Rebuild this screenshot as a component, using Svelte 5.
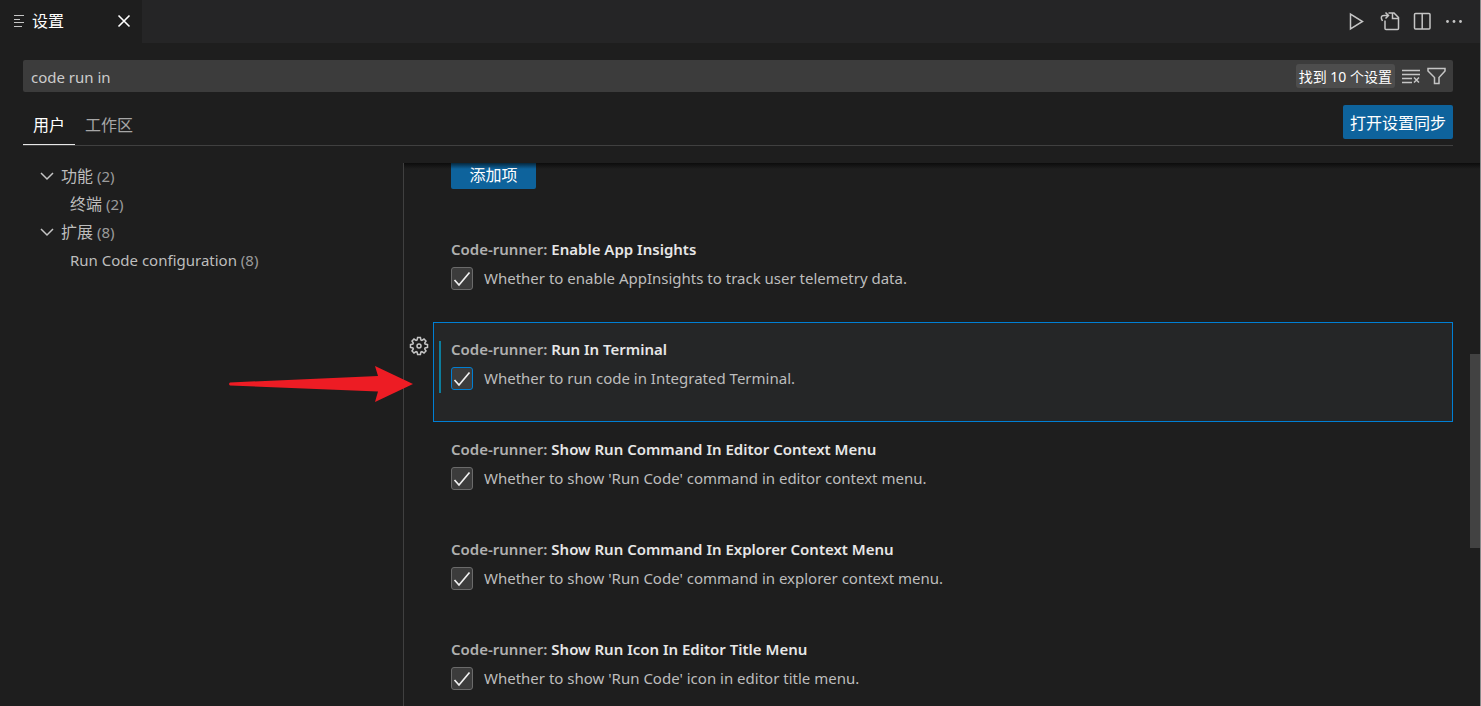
<script lang="ts">
  type TreeItem = { label: string; count: number; lang: string; child?: boolean };
  type Setting = { id: string; title: string; text: string; checked: boolean };

  const tree: TreeItem[] = [
    { label: '功能', count: 2, lang: 'zh' },
    { label: '终端', count: 2, lang: 'zh', child: true },
    { label: '扩展', count: 8, lang: 'zh' },
    { label: 'Run Code configuration', count: 8, lang: 'en', child: true },
  ];

  let settings = $state<Setting[]>([
    {
      id: 'enableAppInsights',
      title: 'Enable App Insights',
      text: 'Whether to enable AppInsights to track user telemetry data.',
      checked: true,
    },
    {
      id: 'runInTerminal',
      title: 'Run In Terminal',
      text: 'Whether to run code in Integrated Terminal.',
      checked: true,
    },
    {
      id: 'showEditorContext',
      title: 'Show Run Command In Editor Context Menu',
      text: "Whether to show 'Run Code' command in editor context menu.",
      checked: true,
    },
    {
      id: 'showExplorerContext',
      title: 'Show Run Command In Explorer Context Menu',
      text: "Whether to show 'Run Code' command in explorer context menu.",
      checked: true,
    },
    {
      id: 'showRunIcon',
      title: 'Show Run Icon In Editor Title Menu',
      text: "Whether to show 'Run Code' icon in editor title menu.",
      checked: true,
    },
  ]);

  let query = $state('code run in');
  let scope = $state('用户');
  let selected = $state('runInTerminal');
</script>

<div class="window">
  <header class="tabs">
    <div class="tab">
      <svg class="tab-icon" viewBox="0 0 12 14">
        <path d="M1 1.500h10M1 5.500h6M1 8.500h10M1 12.500h8" />
      </svg>
      <span class="tab-name">设置</span>
      <button class="icon" aria-label="关闭">
        <svg width="20" height="20" viewBox="0 0 20 20" class="bright">
          <path d="M4.500 4.500l11 11M15.500 4.500l-11 11" />
        </svg>
      </button>
    </div>
    <div class="actions">
      <button class="icon" aria-label="Run Code">
        <svg width="20" height="20" viewBox="0 0 20 20">
          <path d="M2.500 3v15L14.500 10.500z" />
        </svg>
      </button>
      <button class="icon" aria-label="打开设置 (json)">
        <svg width="20" height="20" viewBox="0 0 20 20">
          <path d="M5 9.500v8q0 1 1 1h11.500q1 0 1-1V6.500L14 2H8.500M12.500 2v5.500h6" />
          <path d="M2.500 10Q-.5 4.500 4 4.500h4.500M5.500 1.500l3 3-3 3" />
        </svg>
      </button>
      <button class="icon" aria-label="拆分编辑器">
        <svg width="20" height="20" viewBox="0 0 20 20">
          <rect x="2.500" y="2.500" width="15.500" height="15.500" rx="1" />
          <path d="M10.200 2.500v15.500" />
        </svg>
      </button>
      <button class="icon" aria-label="更多">
        <svg width="20" height="20" viewBox="0 0 20 20" class="dots">
          <circle cx="3.500" cy="10.500" r="1.400" />
          <circle cx="10" cy="10.500" r="1.400" />
          <circle cx="16.500" cy="10.500" r="1.400" />
        </svg>
      </button>
    </div>
  </header>

  <div class="head">
    <div class="search">
      <input type="text" aria-label="搜索设置" bind:value={query} />
      <span class="found">找到 10 个设置</span>
      <button class="icon" aria-label="清除搜索">
        <svg width="20" height="20" viewBox="0 0 20 20">
          <path d="M1 4.500h18M1 8.500h18M1 12.500h10M1 16.500h10M13 11.500l5 5M18 11.500l-5 5" />
        </svg>
      </button>
      <button class="icon" aria-label="筛选">
        <svg width="20" height="20" viewBox="0 0 20 20">
          <path d="M1 2.500h17v2.500l-6 6.500v6H7.500v-6L1 5z" />
        </svg>
      </button>
    </div>

    <div class="scopes">
      {#each ['用户', '工作区'] as name}
        <button class="scope" class:active={scope == name} onclick={() => (scope = name)}>{name}</button>
      {/each}
      <button class="primary sync">打开设置同步</button>
    </div>
  </div>

  <div class="body">
    <nav class="toc">
      <ul>
        {#each tree as item}
          <li class:child={item.child}>
            {#if !item.child}
              <svg width="16" height="16" viewBox="0 0 16 16">
                <path d="M2 5l6 6 6-6" />
              </svg>
            {/if}
            <span><span lang={item.lang}>{item.label}</span> <span class="count">({item.count})</span></span>
          </li>
        {/each}
      </ul>
    </nav>

    <main class="list">
      <button class="primary add">添加项</button>
      {#each settings as s (s.id)}
        <div class="setting" class:selected={selected == s.id} onfocusin={() => (selected = s.id)}>
          {#if selected == s.id}
            <button class="icon gear" aria-label="更多操作">
              <svg width="20" height="20" viewBox="0 0 20 20">
                <path
                  d="M8.600 1.500h2.800l.5 2.400 1 .4 2.100-1.300 2 2-1.300 2.100.4 1 2.400.5v2.800l-2.400.5-.4 1 1.300 2.100-2 2-2.100-1.300-1 .4-.5 2.400H8.600l-.5-2.400-1-.4L5 17l-2-2 1.300-2.100-.4-1-2.400-.5V8.600l2.400-.5.4-1L3 5l2-2 2.100 1.300 1-.4z"
                />
                <circle cx="10" cy="10" r="2" />
              </svg>
            </button>
          {/if}
          <div class="content" class:modified={s.id == 'runInTerminal'}>
            <h3><span class="category">Code-runner:</span> {s.title}</h3>
            <label>
              <input type="checkbox" bind:checked={s.checked} />
              <span class="text">{s.text}</span>
            </label>
          </div>
        </div>
      {/each}
    </main>
    <div class="shadow"></div>
    <div class="thumb"></div>
    <svg class="arrow" width="186" height="38" viewBox="0 0 186 38">
      <path d="M1 17.500L149 11 146 1l38 18-38 18 3-10.500L1 20.500q-2-1.500 0-3z" />
    </svg>
  </div>
</div>

<style>
  :global(body) {
    margin: 0;
    background: #1e1e1e;
  }
  .window {
    display: flex;
    flex-direction: column;
    box-sizing: border-box;
    height: 100vh;
    overflow: hidden;
    border-right: 1px solid #8a8a8a;
    background: #1e1e1e;
    color: #bdbdbd;
    font: 15px/20px 'Noto Sans', 'Noto Sans CJK SC', sans-serif;
  }
  button,
  input {
    font: inherit;
    color: inherit;
  }
  svg {
    display: block;
    flex: none;
    fill: none;
    stroke: #c5c5c5;
    stroke-width: 1.5;
  }
  .icon {
    display: flex;
    padding: 0;
    border: 0;
    background: none;
    cursor: pointer;
  }
  .bright {
    stroke: #fff;
    stroke-width: 1.6;
  }
  .dots {
    fill: #c5c5c5;
    stroke: none;
  }

  .tabs {
    display: flex;
    flex: none;
    justify-content: space-between;
    height: 43px;
    background: #252526;
  }
  .tab {
    display: flex;
    align-items: center;
    box-sizing: border-box;
    width: 142px;
    padding: 0 8px 2px 13px;
    background: #1e1e1e;
    color: #fff;
    font-size: 16px;
  }
  .tab-icon {
    width: 12px;
    height: 14px;
    margin-right: 7px;
    stroke-width: 1.2;
  }
  .tab-name {
    flex: 1;
  }
  .actions {
    display: flex;
    align-items: center;
    gap: 12px;
    padding: 0 16px 2px 0;
  }

  .head {
    flex: none;
    padding: 17px 27px 0 23px;
  }
  .search {
    display: flex;
    align-items: center;
    gap: 6px;
    height: 32px;
    padding: 0 6px 0 8px;
    border-radius: 2px;
    background: #3c3c3c;
  }
  .search input {
    flex: 1;
    min-width: 0;
    padding: 2px 0 0;
    border: 0;
    outline: 0;
    background: none;
    color: #ccc;
  }
  .found {
    padding: 3px 3px 1px;
    border-radius: 3px;
    background: #4d4d4d;
    color: #fff;
    font-size: 14px;
  }
  .scopes {
    display: flex;
    align-items: flex-end;
    height: 53px;
    border-bottom: 1px solid #404040;
  }
  .scope {
    height: 40px;
    padding: 0 10px;
    border: 0;
    border-bottom: 1px solid transparent;
    background: none;
    color: #a6a6a6;
    font-size: 16px;
    cursor: pointer;
  }
  .scope.active {
    border-color: #e7e7e7;
    color: #fff;
  }
  .primary {
    border: 0;
    border-radius: 2px;
    background: #0e639c;
    color: #fff;
    font-size: 16px;
    cursor: pointer;
  }
  .sync {
    height: 34px;
    margin: 0 0 6px auto;
    padding: 2px 7px 0;
  }

  .body {
    position: relative;
    display: flex;
    flex: 1;
    min-height: 0;
    margin-top: 17px;
  }
  .toc {
    box-sizing: border-box;
    width: 404px;
    border-right: 1px solid #404040;
  }
  .toc ul {
    display: flex;
    flex-direction: column;
    margin: 0;
    padding: 0 0 0 39px;
    list-style: none;
  }
  .toc li {
    display: flex;
    align-items: center;
    gap: 6px;
    box-sizing: border-box;
    height: 28px;
    padding-bottom: 2px;
  }
  .toc li.child {
    padding-left: 31px;
  }
  .toc [lang='zh'] {
    font-size: 16px;
  }
  .count {
    color: #9b9b9b;
  }

  .list {
    flex: 1;
    min-width: 0;
    padding: 0 27px 0 29px;
    overflow: hidden;
  }
  .add {
    display: block;
    width: 85px;
    height: 32px;
    margin: -6px 0 33px 18px;
    padding: 4px 0 0;
  }
  .setting {
    position: relative;
    box-sizing: border-box;
    height: 100px;
    padding: 18px 5px;
    border: 1px solid transparent;
  }
  .setting.selected {
    border-color: #007fd4;
    background: #252627;
  }
  .gear {
    position: absolute;
    top: 13px;
    left: -25px;
  }
  .content {
    height: 52px;
    padding-left: 10px;
    border-left: 2px solid transparent;
  }
  .modified {
    border-color: #0c7d9d;
  }
  h3 {
    margin: 0;
    color: #e7e7e7;
    font-size: 15px;
    font-weight: 600;
    line-height: 16px;
  }
  .category {
    color: #b0b0b0;
  }
  label {
    display: flex;
    align-items: center;
    gap: 11px;
    margin-top: 10px;
  }
  .text {
    padding-bottom: 2px;
  }
  input[type='checkbox'] {
    appearance: none;
    box-sizing: border-box;
    width: 22px;
    height: 23px;
    margin: 0;
    border: 1px solid #6b6b6b;
    border-radius: 3px;
    background: #3c3c3c;
  }
  input[type='checkbox']:checked {
    background: #3c3c3c
      url("data:image/svg+xml,%3Csvg xmlns='http://www.w3.org/2000/svg' viewBox='0 0 20 20'%3E%3Cpath d='M2.500 11l4.500 5L17.500 3.500' fill='none' stroke='%23f0f0f0' stroke-width='1.700'/%3E%3C/svg%3E")
      center / 20px no-repeat;
  }
  .selected input[type='checkbox'] {
    border-color: #007fd4;
  }

  .shadow {
    position: absolute;
    top: 0;
    right: 0;
    left: 404px;
    height: 6px;
    background: linear-gradient(#0009, #0000);
  }
  .thumb {
    position: absolute;
    top: 191px;
    right: 0;
    width: 10px;
    height: 194px;
    background: #424242;
  }
  .arrow {
    position: absolute;
    top: 202px;
    left: 229px;
    fill: #ed1c24;
    stroke: none;
    pointer-events: none;
  }
</style>
